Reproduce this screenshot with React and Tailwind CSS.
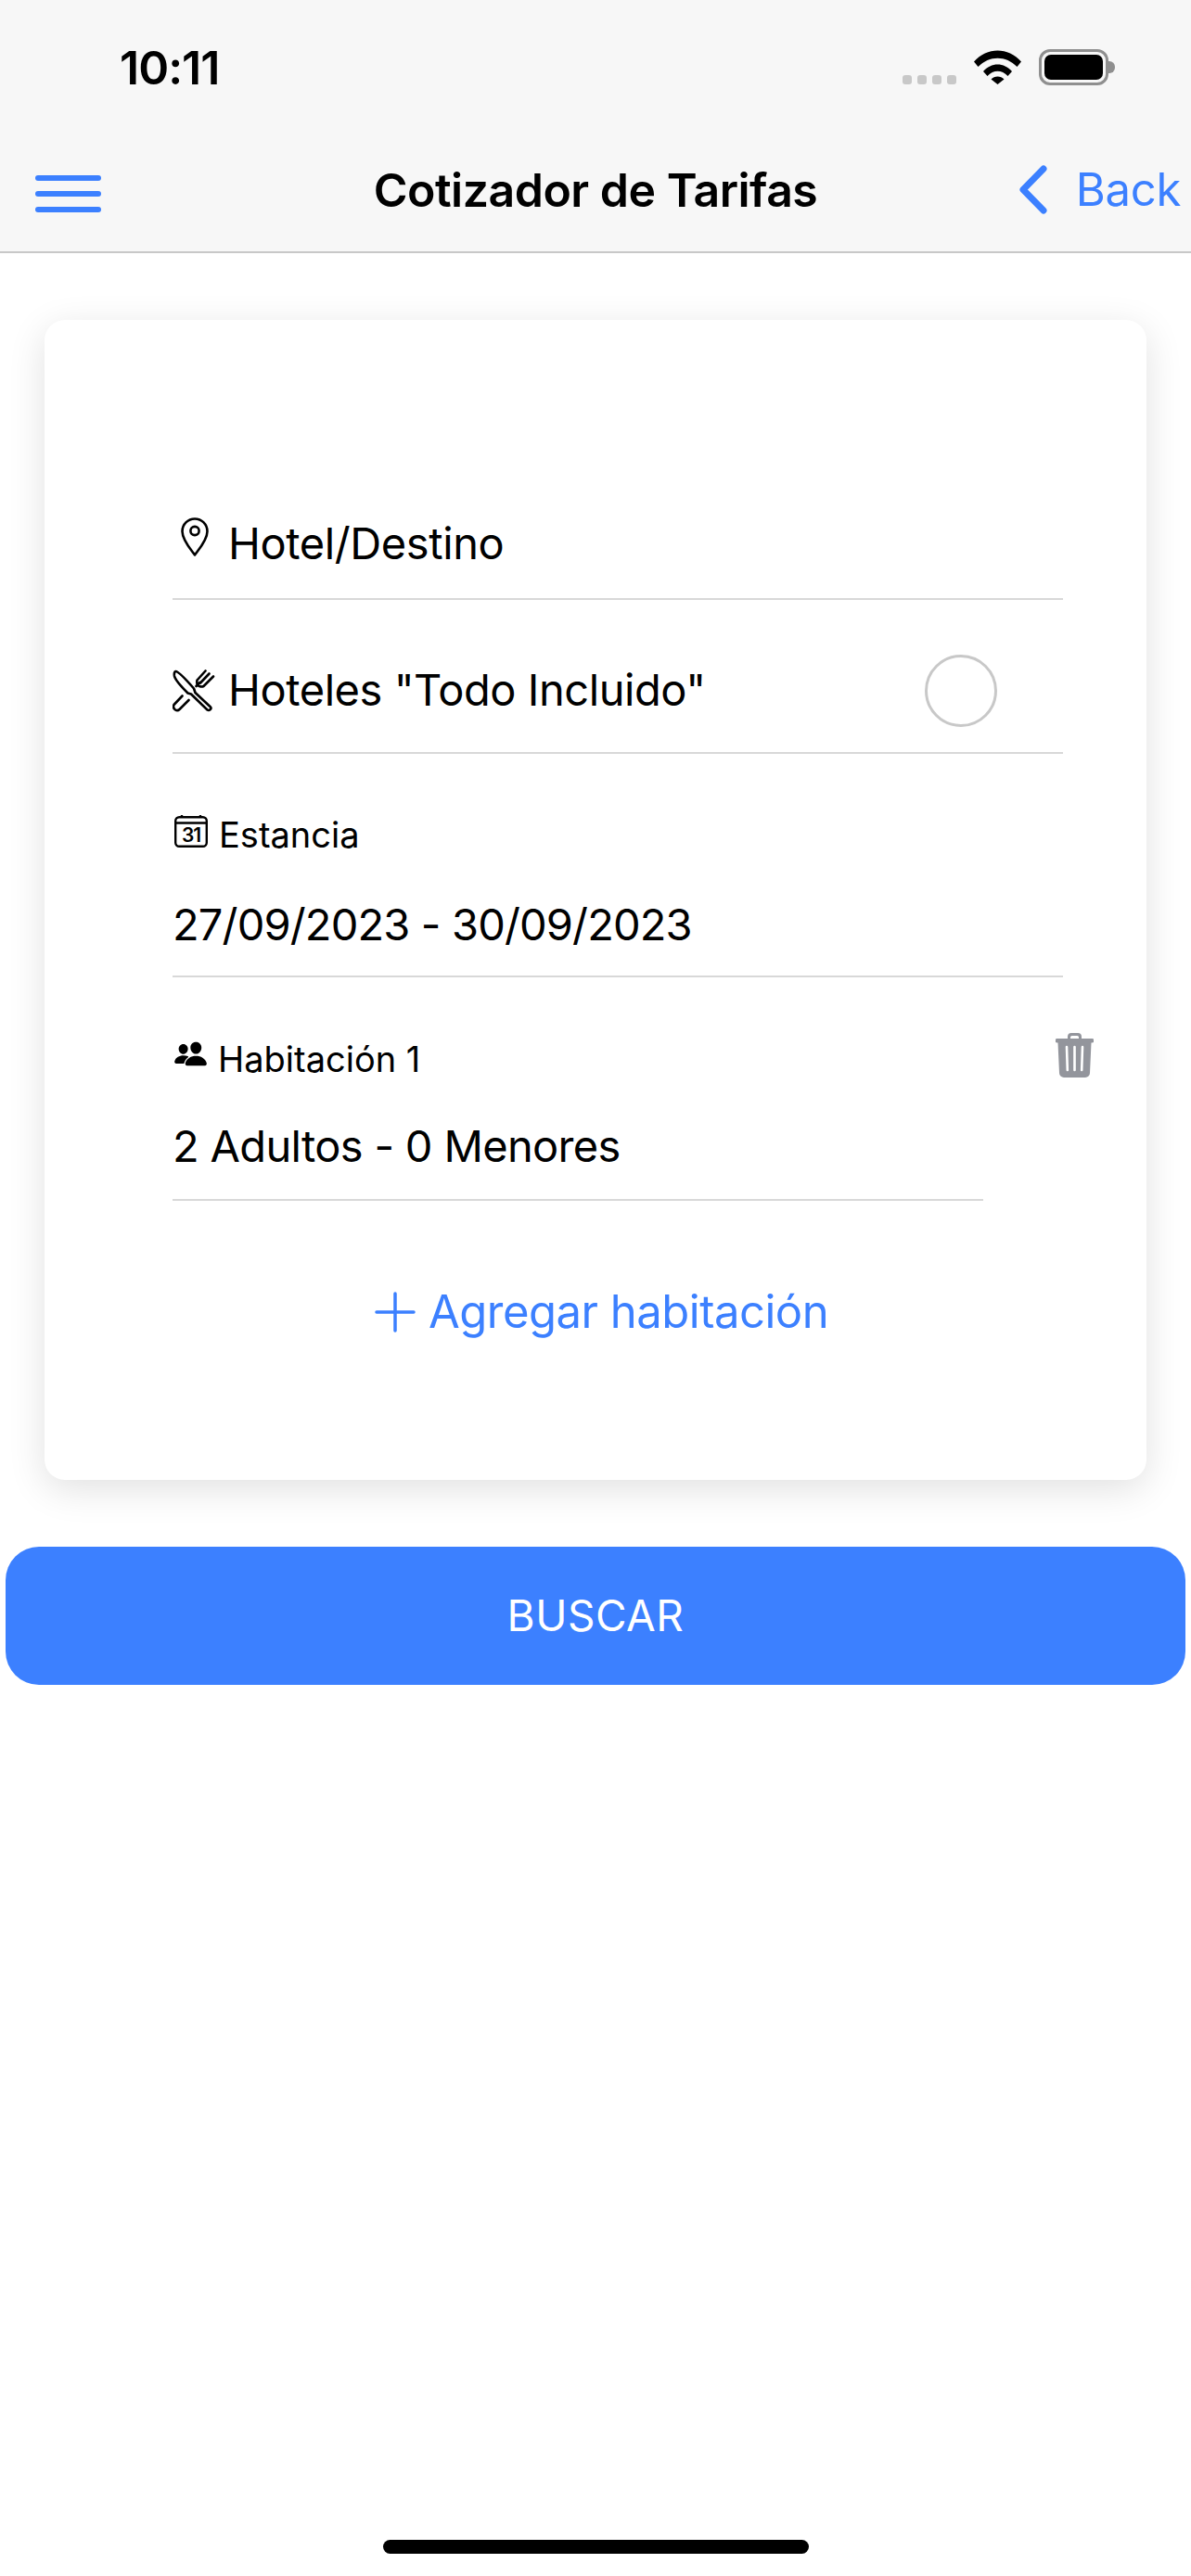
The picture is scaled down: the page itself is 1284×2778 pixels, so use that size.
import { IoPeople } from "react-icons/io5";

const font = { fontFamily: "Inter, 'Liberation Sans', sans-serif" };

const PinIcon = () => (
    <svg viewBox="0 0 30 42" className="w-[30px] h-[42px] shrink-0" fill="none" stroke="#000" strokeWidth="2.6">
        <path d="M15 40.5C11 35 1.5 24.5 1.5 15a13.5 13.5 0 0 1 27 0C28.5 24.5 19 35 15 40.5Z" strokeLinejoin="round" />
        <circle cx="15" cy="14.5" r="4.6" />
    </svg>
);

const CutleryIcon = () => (
    <svg viewBox="0 0 46 46" className="w-[46px] h-[46px] shrink-0" fill="none" stroke="#000" strokeWidth="2.6" strokeLinejoin="round" strokeLinecap="round">
        {/* knife */}
        <path d="M3.5 2C6 2 13 9 23 20.500L24.500 25L41 40.500C42.500 42.500 39.500 45 37.500 43.500L20 26.500L16.500 25.500C10 19 3 12 2 7C1.500 4 2 2.500 3.500 2Z" />
        {/* fork */}
        <path d="M25.500 18L29.500 14M26.500 11.500L35.500 1.500M30 14.500L39.500 4.500M33.500 18L44 7.500M26.500 11.500C26 14 26.500 17 29 18C31 18.700 32 18.700 33.500 18" />
        {/* handle behind the knife */}
        <path d="M10.500 28.500L1.500 38C0.500 40 1 42 3 43.500C4.500 44.500 6.500 44 7.500 43L17.500 33" />
    </svg>
);

const CalendarIcon = () => (
    <svg viewBox="0 0 36 36" className="w-[36px] h-[36px] shrink-0">
        <rect x="1.2" y="3.2" width="33.6" height="31.6" rx="4" fill="none" stroke="#000" strokeWidth="2.4" />
        <path d="M1.2 9.5H34.8M8 1V4M28 1V4" stroke="#000" strokeWidth="2.4" fill="none" />
        <text x="18" y="30" textAnchor="middle" fontSize="21" fontWeight="600" letterSpacing="-1" fill="#000" style={font}>31</text>
    </svg>
);

const TrashIcon = () => (
    <svg viewBox="0 0 41 48" className="w-[41px] h-[48px]">
        <path fill="#93959c" d="M13 6V4a4 4 0 0 1 4-4h7a4 4 0 0 1 4 4v2h11.500a1.500 1.500 0 0 1 0 4.500H38.500L37 43a5 5 0 0 1-5 5H9a5 5 0 0 1-5-5L2.500 10.500H1.500a1.500 1.500 0 0 1 0-4.500ZM16 6h9V4.500a1.500 1.500 0 0 0-1.500-1.500h-6A1.500 1.500 0 0 0 16 4.500Z" fillRule="evenodd" />
        <path stroke="#fff" strokeWidth="2.600" strokeLinecap="round" d="M12 15L12.800 40M20.500 15V40M29 15L28.200 40" />
    </svg>
);

const Divider = ({ className = "" }) => <div className={`h-[2px] bg-[#d8d8d8] ${className}`} />;

export default function App() {
    return (
        <div style={font} className="w-[1284px] h-[2778px] bg-white flex flex-col text-black overflow-hidden">
            <header className="h-[273px] shrink-0 bg-[#f7f7f7] border-b-2 border-[#c8c8c8] flex flex-col">
                {/* status bar */}
                <div className="h-[146px] flex justify-between pl-[129px] pr-[82px] pt-[43px]">
                    <span className="text-[50px] leading-[60px] font-semibold tracking-[-1px]">10:11</span>
                    <div className="flex items-start pt-[10px]">
                        <div className="flex gap-[6px] mt-[28px] mr-[19px]">
                            {[0, 1, 2, 3].map((i) => (
                                <span key={i} className="w-[10px] h-[10px] rounded-[3px] bg-[#c8c8c8]" />
                            ))}
                        </div>
                        <svg viewBox="0 0 51 37" className="w-[51px] h-[37px] mt-[1px] mr-[19px]" fill="#000">
                            <path d="M0 12.500C14-3.500 37-3.500 51 12.500L46.500 18C34.500 5.500 16.500 5.500 4.500 18Z" />
                            <path d="M10 23C18.500 13 32.500 13 41 23L36.500 28C30 21 21 21 14.500 28Z" />
                            <path d="M18.500 31.500C22 27.500 29 27.500 32.500 31.500L25.500 37Z" />
                        </svg>
                        <div className="flex items-center">
                            <div className="w-[75px] h-[39px] rounded-[12px] border-[3.5px] border-[#8f8f8f] p-[3px]">
                                <div className="w-full h-full rounded-[7px] bg-black" />
                            </div>
                            <div className="w-[7px] h-[13px] rounded-r-[6px] bg-[#8f8f8f]" />
                        </div>
                    </div>
                </div>
                {/* navigation bar */}
                <div className="flex-1 grid grid-cols-[1fr_auto_1fr] items-center px-[11px] pb-[8px]">
                    <div className="flex flex-col gap-[11px] w-[71px] ml-[27px] mt-[9px]">
                        <span className="h-[6px] rounded-full bg-[#3c80ff]" />
                        <span className="h-[6px] rounded-full bg-[#3c80ff]" />
                        <span className="h-[6px] rounded-full bg-[#3c80ff]" />
                    </div>
                    <span className="text-[50px] leading-[60px] font-semibold tracking-[-0.5px]">Cotizador de Tarifas</span>
                    <div className="flex items-center justify-end gap-[30px] text-[#3c80ff]">
                        <svg viewBox="0 0 32 53" className="w-[32px] h-[53px]" fill="none" stroke="#3c80ff" strokeWidth="7" strokeLinecap="round" strokeLinejoin="round">
                            <path d="M27 4L5 26.500L27 49" />
                        </svg>
                        <span className="text-[49px] leading-[60px] tracking-[-0.3px]">Back</span>
                    </div>
                </div>
            </header>

            <main className="flex flex-col flex-1">
                <section className="mt-[72px] mx-[48px] h-[1251px] rounded-[22px] bg-white shadow-[0_10px_40px_rgba(0,0,0,0.12)] pl-[138px] pr-[57px] pt-[200px]">
                    <div className="w-[960px]">
                        <div className="h-[100px] flex items-start gap-[21px] pl-[9px] pt-[13px]">
                            <PinIcon />
                            <span className="text-[47px] leading-[57px] mt-[-1px] tracking-[-0.4px]">Hotel/Destino</span>
                        </div>
                        <Divider />
                        <div className="h-[164px] flex items-center pt-[32px]">
                            <CutleryIcon />
                            <span className="text-[47px] leading-[57px] ml-[14px] mb-[3px] tracking-[-0.45px]">Hoteles "Todo Incluido"</span>
                            <span className="ml-auto mr-[71px] w-[78px] h-[78px] rounded-full border-[3px] border-[#c8c8c8]" />
                        </div>
                        <Divider />
                        <div className="h-[239px] pt-[65px]">
                            <div className="flex items-center gap-[12px] pl-[2px]">
                                <span className="mb-[8px]"><CalendarIcon /></span>
                                <span className="text-[38px] leading-[44px]">Estancia</span>
                            </div>
                            <div className="text-[47px] leading-[57px] mt-[46px] tracking-[-0.85px]">27/09/2023 - 30/09/2023</div>
                        </div>
                        <Divider />
                    </div>
                    <div className="w-[993px] flex justify-between items-start">
                        <div className="w-[874px] h-[239px] pt-[64px]">
                            <div className="flex items-center gap-[11px] pl-[1px]">
                                <IoPeople className="w-[37px] h-[37px] shrink-0 mb-[10px]" />
                                <span className="text-[38px] leading-[44px]">Habitación 1</span>
                            </div>
                            <div className="text-[47px] leading-[57px] mt-[42px] tracking-[-0.67px]">2 Adultos - 0 Menores</div>
                        </div>
                        <div className="mt-[60px]">
                            <TrashIcon />
                        </div>
                    </div>
                    <Divider className="w-[874px]" />
                    <div className="mt-[90px] ml-[218px] flex items-center gap-[14px] text-[#3c80ff]">
                        <svg viewBox="0 0 44 44" className="w-[44px] h-[44px]" fill="none" stroke="#3c80ff" strokeWidth="3.500" strokeLinecap="round">
                            <path d="M22 2V42M2 22H42" />
                        </svg>
                        <span className="text-[49px] leading-[60px] tracking-[-0.5px]">Agregar habitación</span>
                    </div>
                </section>

                <button className="mt-[72px] mx-[6px] h-[149px] rounded-[36px] bg-[#3c80ff] text-white text-[46px] tracking-[0.5px]">BUSCAR</button>

                <div className="mt-auto mb-[24px] mx-auto w-[459px] h-[15px] rounded-full bg-black" />
            </main>
        </div>
    );
}
